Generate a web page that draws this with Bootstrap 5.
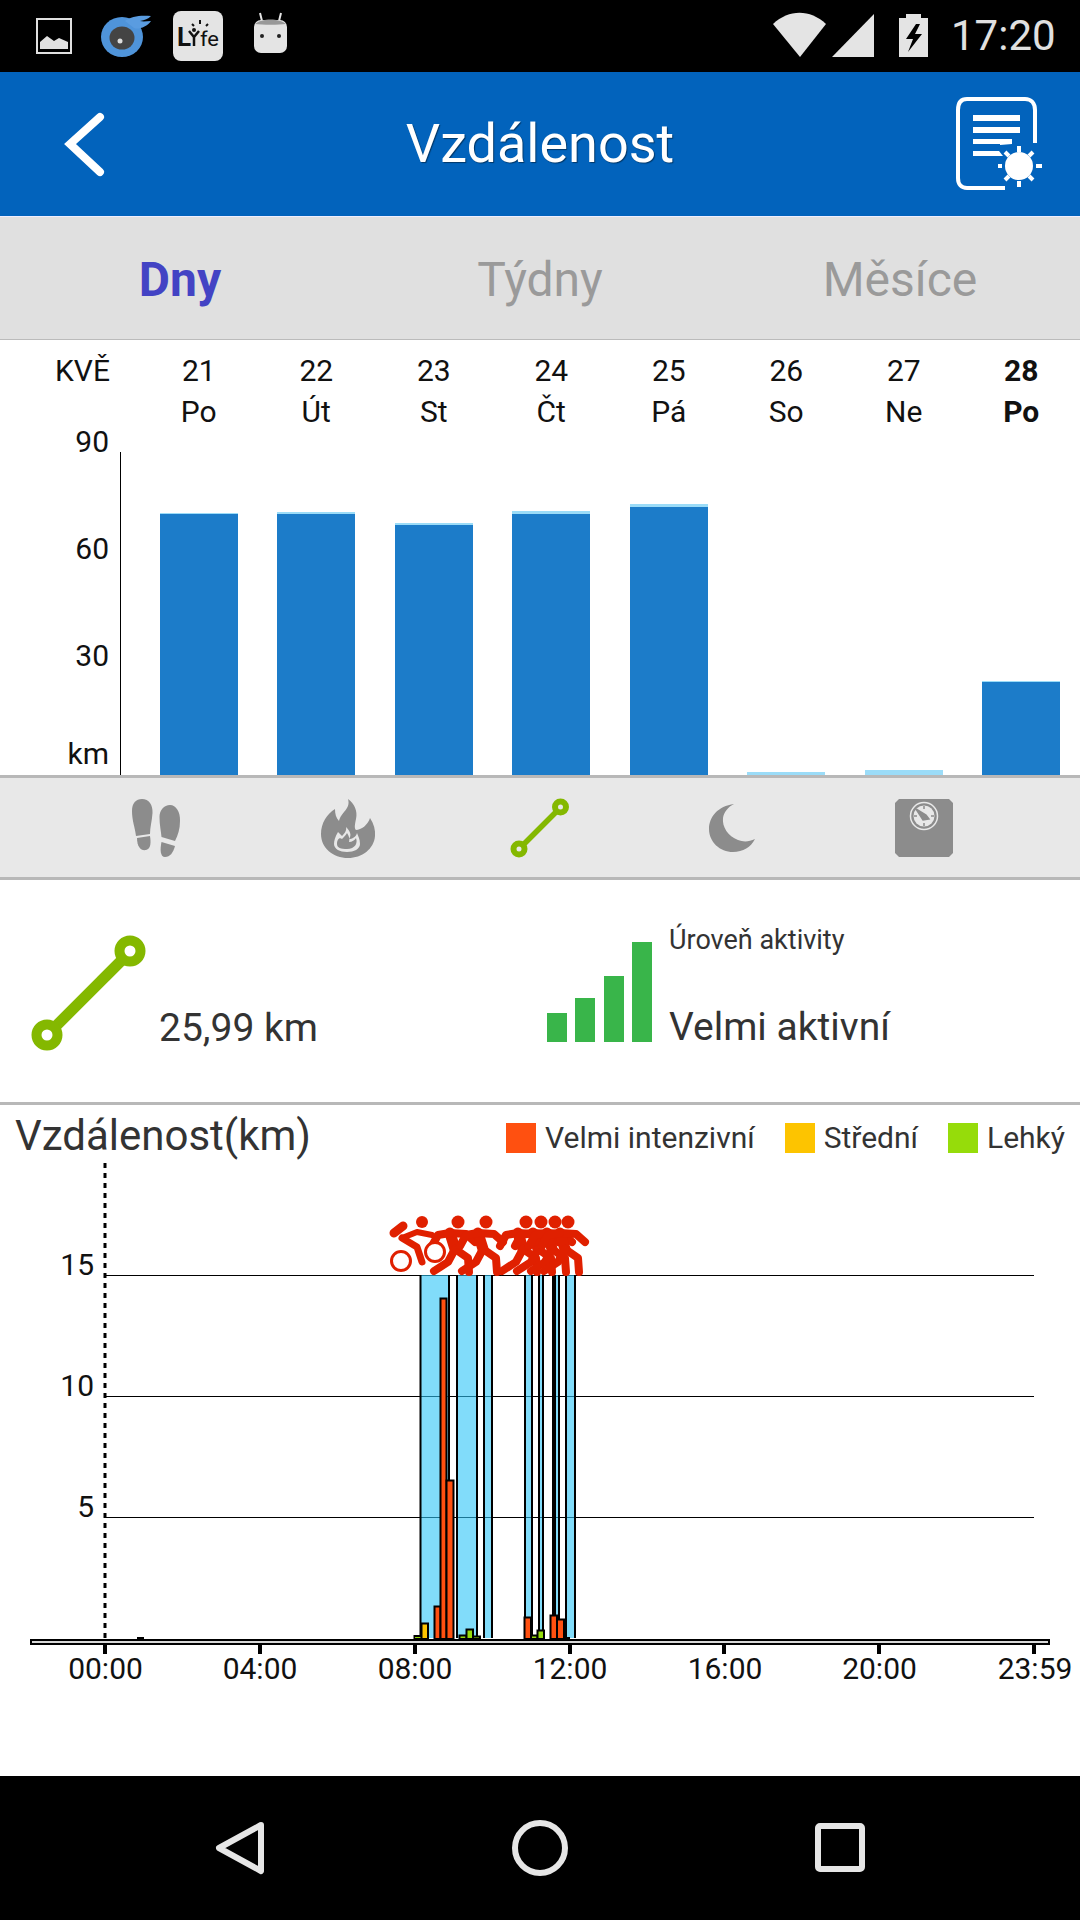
<!DOCTYPE html>
<html lang="cs">
<head>
  <meta charset="UTF-8" />
  <meta name="viewport" content="width=device-width, initial-scale=1.0"/>
  <title>Vzdálenost</title>
  <link href="https://cdn.jsdelivr.net/npm/bootstrap@5.3.2/dist/css/bootstrap.min.css" rel="stylesheet" />
  <style>
    body {
      background-color: #fff;
      color: #111;
      font-family: Roboto, "Liberation Sans", sans-serif;
      width: 1080px;
      margin: 0;
    }
    svg { display: block; }

    .status-bar { height: 72px; background-color: #000; }
    .status-time { color: #e0e0e0; font-size: 42px; line-height: 72px; width: 105px; margin-left: 3px; margin-right: 24px; }

    .app-header { height: 144px; background-color: #0263bc; }
    .app-header-side { width: 130px; }
    .app-title { color: #fff; font-size: 54px; line-height: 60px; text-shadow: 1px 1px 1px rgba(0, 0, 0, .45); }

    .period-tabs { height: 124px; padding-top: 3px; background-color: #e0e0e0; border-top: 1px solid #eef; border-bottom: 1px solid #bbb; }
    .period-tab { width: 360px; font-size: 48px; line-height: 60px; color: #9a9a9a; }
    .period-tab.active-tab { color: #4343c4; font-weight: 700; }

    .date-row { padding-top: 10px; height: 92px; font-size: 30px; line-height: 41px; }
    .month-cell { width: 140px; padding-right: 30px; text-align: right; }
    .date-cell { width: 117.5px; text-align: center; }

    .week-chart { height: 343px; }
    .y-labels { width: 120px; padding-right: 11px; text-align: right; font-size: 30px; line-height: 20px; gap: 87px; }
    .km-label { margin-top: -9px; }
    .week-plot { width: 960px; height: 323px; margin-top: 20px; padding-left: 19px; border-left: 1px solid #000; }
    .day-col { width: 117.5px; }
    .day-bar { width: 78px; }
    .bar-top { background-color: #9bdcf8; }
    .bar-fill { background-color: #1c7cc9; }

    .metric-strip { height: 105px; background-color: #e8e8e8; border-top: 3px solid #b8b8b8; border-bottom: 3px solid #b8b8b8; padding: 0 60px; }
    .metric-item { width: 192px; }

    .summary { height: 225px; padding-top: 45px; border-bottom: 3px solid #b8b8b8; color: #333; }
    .summary-distance { width: 547px; padding-left: 31px; margin-top: 10px; }
    .summary-value { font-size: 39px; line-height: 46px; margin-left: 13px; }
    .level-bars { width: 105px; height: 100px; margin-top: 17px; margin-right: 17px; }
    .level-bars div { width: 20px; background-color: #39b54a; }
    .level-text { height: 125px; }
    .level-caption { font-size: 27px; line-height: 30px; }
    .level-value { font-size: 39px; line-height: 46px; }

    .detail-head { height: 56px; padding: 6px 15px 0 15px; color: #333; }
    .detail-title { font-size: 42px; line-height: 50px; }
    .legend-item { font-size: 30px; line-height: 30px; margin-left: 30px; margin-top: 12px; }
    .legend-swatch { width: 30px; height: 30px; margin-right: 9px; }
    .detail-chart { height: 615px; }
    .detail-chart text { font-family: Roboto, "Liberation Sans", sans-serif; font-size: 30px; fill: #111; }

    .nav-bar { height: 144px; background-color: #000; padding: 0 90px; }
    .nav-item-box { width: 300px; }
  </style>
</head>
<body>

  <!-- status bar -->
  <div class="status-bar d-flex align-items-center">
    <svg width="300" height="72" viewBox="0 0 300 72">
      <rect x="37" y="19" width="34" height="34" fill="none" stroke="#e0e0e0" stroke-width="2"/>
      <path d="M40 49V42L47 36L54 41L59 38L68 42V49Z" fill="#e0e0e0"/>
      <ellipse cx="122" cy="37" rx="21" ry="20" fill="#4f94da"/>
      <path d="M125 21C131 16 141 15 151 16C148 19 145 20 140 21C144 22 147 21 151 21C147 27 138 30 134 28Z" fill="#5a9ce0"/>
      <ellipse cx="122" cy="38" rx="12.5" ry="11.5" fill="#444"/>
      <circle cx="120" cy="41" r="2.5" fill="#ddd"/>
      <rect x="173" y="11" width="50" height="50" rx="8" fill="#e4e4e4"/>
      <text x="177" y="46" font-family="Roboto, sans-serif" font-size="26" font-weight="700" fill="#111">L</text>
      <path d="M189 31L194 37L199 31M194 37V46" fill="none" stroke="#111" stroke-width="2.5"/>
      <circle cx="194" cy="30" r="2" fill="#111"/>
      <path d="M200 20V24M192 24L194 26M208 24L206 26" stroke="#111" stroke-width="2"/>
      <text x="200" y="46" font-family="Roboto, sans-serif" font-size="21" fill="#111" textLength="19" lengthAdjust="spacingAndGlyphs">fe</text>
      <rect x="254" y="20" width="33" height="33" rx="7" fill="#e4e4e4"/>
      <path d="M262 21L260 13M279 21L281 13" stroke="#e4e4e4" stroke-width="2"/>
      <path d="M255 24C262 18 279 18 286 24C279 25 262 25 255 24Z" fill="#999"/>
      <circle cx="262" cy="36" r="2" fill="#222"/>
      <circle cx="279" cy="36" r="2" fill="#222"/>
    </svg>
    <svg class="ms-auto" width="175" height="72" viewBox="773 0 175 72">
      <path d="M773 24C789 9 810 9 826 24L800 57Z" fill="#e4e4e4"/>
      <path d="M832 57L874 14V57Z" fill="#e4e4e4"/>
      <path d="M899 18H906V14H921V18H928V57H899Z" fill="#e4e4e4"/>
      <path d="M916 24L906 39H913L908 52L922 34H915L920 24Z" fill="#000"/>
    </svg>
    <div class="status-time">17:20</div>
  </div>

  <!-- header -->
  <div class="app-header d-flex align-items-center">
    <div class="app-header-side">
      <svg class="ms-5" width="60" height="70" viewBox="48 109 60 70">
        <path d="M100 117L70 144L100 172" fill="none" stroke="#fff" stroke-width="8" stroke-linecap="round" stroke-linejoin="miter"/>
      </svg>
    </div>
    <div class="app-title flex-fill text-center">Vzdálenost</div>
    <div class="app-header-side">
      <svg width="100" height="100" viewBox="950 94 100 100">
        <path d="M1005 188H967C961 188 958 184 958 178V110C958 103 961 99 967 99H1025C1031 99 1035 103 1035 110V143" fill="none" stroke="#fff" stroke-width="4"/>
        <path d="M973 115H1020V121H973ZM973 127H1020V133H973ZM973 139H1012V144L1000 145V144H973ZM973 151H999L1003 156H973Z" fill="#fff"/>
        <circle cx="1019" cy="166" r="14" fill="#fff"/>
        <path d="M1019 146V152M1019 181V187M998 166H1002M1036 166H1042M1005 152L1009 156M1033 152L1029 156M1005 180L1009 176M1033 180L1029 176" stroke="#fff" stroke-width="4"/>
      </svg>
    </div>
  </div>

  <!-- day / week / month -->
  <div class="period-tabs d-flex align-items-center text-center">
    <div class="period-tab active-tab">Dny</div>
    <div class="period-tab">Týdny</div>
    <div class="period-tab">Měsíce</div>
  </div>

  <div class="date-row d-flex">
    <div class="month-cell">KVĚ</div>
    <div class="date-cell">21<br>Po</div>
    <div class="date-cell">22<br>Út</div>
    <div class="date-cell">23<br>St</div>
    <div class="date-cell">24<br>Čt</div>
    <div class="date-cell">25<br>Pá</div>
    <div class="date-cell">26<br>So</div>
    <div class="date-cell">27<br>Ne</div>
    <div class="date-cell fw-bold">28<br>Po</div>
  </div>

  <!-- weekly bars -->
  <div class="week-chart d-flex">
    <div class="y-labels d-flex flex-column">
      <div>90</div>
      <div>60</div>
      <div>30</div>
      <div class="km-label">km</div>
    </div>
    <div class="week-plot d-flex align-items-end">
      <div class="day-col d-flex justify-content-center"><div class="day-bar"><div class="bar-top" style="height:1px"></div><div class="bar-fill" style="height:261px"></div></div></div>
      <div class="day-col d-flex justify-content-center"><div class="day-bar"><div class="bar-top" style="height:2px"></div><div class="bar-fill" style="height:261px"></div></div></div>
      <div class="day-col d-flex justify-content-center"><div class="day-bar"><div class="bar-top" style="height:2px"></div><div class="bar-fill" style="height:250px"></div></div></div>
      <div class="day-col d-flex justify-content-center"><div class="day-bar"><div class="bar-top" style="height:3px"></div><div class="bar-fill" style="height:261px"></div></div></div>
      <div class="day-col d-flex justify-content-center"><div class="day-bar"><div class="bar-top" style="height:3px"></div><div class="bar-fill" style="height:268px"></div></div></div>
      <div class="day-col d-flex justify-content-center"><div class="day-bar"><div class="bar-top" style="height:3px"></div></div></div>
      <div class="day-col d-flex justify-content-center"><div class="day-bar"><div class="bar-top" style="height:5px"></div></div></div>
      <div class="day-col d-flex justify-content-center"><div class="day-bar"><div class="bar-top" style="height:1px"></div><div class="bar-fill" style="height:93px"></div></div></div>
    </div>
  </div>

  <!-- metric icons -->
  <div class="metric-strip d-flex align-items-center">
    <div class="metric-item d-flex justify-content-center">
      <svg width="50" height="60" viewBox="131 797 50 60" fill="#8c8c8c">
        <path d="M142 798C149 798 153 804 152.5 812C152 820 150 826 150 833L136 835C135 826 132 820 132 810C132 802 136 798 142 798Z"/>
        <path d="M137 837L150 835C151 841 151 848 146 849C141 850 137 846 137 837Z"/>
        <path d="M170 804C176 804 180.5 811 180 820C180 828 178 834 175 840L161.5 836C161 830 159.5 824 159.5 816C159.5 809 164 804 170 804Z"/>
        <path d="M161.5 841L175 845C173 852 170 856 165 856C160 856 160 848 161.5 841Z"/>
      </svg>
    </div>
    <div class="metric-item d-flex justify-content-center">
      <svg width="56" height="60" viewBox="320 797 56 60">
        <path d="M348 798C354 802 358 810 356 818C355 823 354 827 356 829C361 829 368 824 370 817C374 823 375.5 829 375 835C374 848 362 857 348 857C333 857 321 847 321 833C321 822 327 813 335 808C335 813 336 817 339 820C341 811 351 808 348 798Z" fill="#8c8c8c"/>
        <path d="M346 826C347 830 344 833 342 835L338 831C335 836 334 840 334 843C334 848 340 851 347 851C354 851 360 848 360 843C360 838 358 835 357 832C356 836 352 838 349 838C352 834 350 830 346 826Z" fill="#e8e8e8"/>
        <path d="M337 843C337 839 339 836 342 838C344 836 346 834 347 832C349 835 350 838 349 841C352 841 355 839 356 837C358 842 355 848 347 848C341 848 337 847 337 843Z" fill="#8c8c8c"/>
      </svg>
    </div>
    <div class="metric-item d-flex justify-content-center">
      <svg width="60" height="60" viewBox="510 797 60 60">
        <path d="M519 848L561 806" stroke="#84b800" stroke-width="5.5"/>
        <circle cx="560.5" cy="806" r="5.5" fill="#e8e8e8" stroke="#84b800" stroke-width="6"/>
        <circle cx="519" cy="848" r="5.5" fill="#e8e8e8" stroke="#84b800" stroke-width="6"/>
      </svg>
    </div>
    <div class="metric-item d-flex justify-content-center">
      <svg width="46" height="50" viewBox="709 802 46 50">
        <path d="M734 803C718 805 709 816 709 828C709 841 720 851 733 851C743 851 751 846 755 838C749 841 743 841 738 839C728 835 722 826 723 817C724 811 728 806 734 803Z" fill="#8c8c8c"/>
      </svg>
    </div>
    <div class="metric-item d-flex justify-content-center">
      <svg width="58" height="58" viewBox="895 798 58 58">
        <path d="M899 798H949L953 802V852L949 856H899L895 852V802Z" fill="#8c8c8c"/>
        <circle cx="924" cy="815" r="13.5" fill="none" stroke="#e8e8e8" stroke-width="1.5"/>
        <circle cx="924" cy="815" r="10.5" fill="#e8e8e8"/>
        <path d="M916 808L926 814L929 818L923 819ZM924 805V808M924 822V825M914 815H917M931 815H934" fill="#8c8c8c" stroke="#8c8c8c" stroke-width="1.5"/>
      </svg>
    </div>
  </div>

  <!-- today summary -->
  <div class="summary d-flex">
    <div class="summary-distance d-flex align-items-end align-self-start">
      <svg width="115" height="116" viewBox="31 935 115 116">
        <path d="M47 1035L130 952" stroke="#84b800" stroke-width="11"/>
        <circle cx="130" cy="951" r="10.5" fill="#fff" stroke="#84b800" stroke-width="10"/>
        <circle cx="47" cy="1035" r="10.5" fill="#fff" stroke="#84b800" stroke-width="10"/>
      </svg>
      <div class="summary-value">25,99 km</div>
    </div>
    <div class="level-bars d-flex align-items-end justify-content-between">
      <div style="height:29px"></div>
      <div style="height:44px"></div>
      <div style="height:66px"></div>
      <div style="height:100px"></div>
    </div>
    <div class="level-text d-flex flex-column justify-content-between">
      <div class="level-caption">Úroveň aktivity</div>
      <div class="level-value">Velmi aktivní</div>
    </div>
  </div>

  <!-- intraday chart -->
  <div class="detail-head d-flex justify-content-between align-items-start">
    <div class="detail-title">Vzdálenost(km)</div>
    <div class="d-flex">
      <div class="legend-item d-flex"><div class="legend-swatch" style="background-color:#ff5010"></div>Velmi intenzivní</div>
      <div class="legend-item d-flex"><div class="legend-swatch" style="background-color:#fdc400"></div>Střední</div>
      <div class="legend-item d-flex"><div class="legend-swatch" style="background-color:#96dc0a"></div>Lehký</div>
    </div>
  </div>

  <div class="detail-chart">
    <svg width="1080" height="615" viewBox="0 1161 1080 615">
      <defs>
        <g id="runner" fill="none" stroke="#e02000" stroke-width="8" stroke-linecap="round" stroke-linejoin="round">
          <circle cx="0" cy="0" r="6.5" fill="#e02000" stroke="none"/>
          <path d="M-8 11L-3 27" stroke-width="11"/>
          <path d="M-8 11L8 12L17 20"/>
          <path d="M-8 11L-20 13L-26 24"/>
          <path d="M-3 27L10 36L11 50"/>
          <path d="M-3 27L-10 40L-24 49"/>
        </g>
      </defs>

      <!-- grid -->
      <path d="M105 1275.5H1034M105 1396.5H1034M105 1517.5H1034" stroke="#000" stroke-width="1"/>
      <path d="M105 1163V1638" stroke="#000" stroke-width="3" stroke-dasharray="5 5"/>
      <text x="94" y="1275" text-anchor="end">15</text>
      <text x="94" y="1396" text-anchor="end">10</text>
      <text x="94" y="1517" text-anchor="end">5</text>

      <!-- active periods -->
      <g fill="#2dc5f7" fill-opacity=".6">
        <rect x="420" y="1275" width="29" height="363"/>
        <rect x="457" y="1275" width="20" height="363"/>
        <rect x="484" y="1275" width="8" height="363"/>
        <rect x="525" y="1275" width="7" height="363"/>
        <rect x="539" y="1275" width="4" height="363"/>
        <rect x="555" y="1275" width="4" height="363"/>
        <rect x="566" y="1275" width="9" height="363"/>
      </g>
      <path d="M420.5 1275V1638M449 1275V1638M457 1275V1638M477 1275V1638M484 1275V1638M492 1275V1638M525 1275V1638M532 1275V1638M539 1275V1638M543 1275V1638M554 1275V1638M559 1275V1638M566 1275V1638M575 1275V1638" stroke="#000" stroke-width="2"/>
      <rect x="552" y="1275" width="4" height="363" fill="#000"/>

      <!-- activity bars -->
      <g stroke="#000" stroke-width="2">
        <rect x="414.5" y="1636" width="7" height="3" fill="#96dc0a"/>
        <rect x="421.5" y="1623.5" width="6.5" height="15.5" fill="#fdc400"/>
        <rect x="434.5" y="1606.5" width="6" height="32.5" fill="#ff5010"/>
        <rect x="440.5" y="1298.5" width="6" height="340.5" fill="#ff5010"/>
        <rect x="446.5" y="1480.5" width="7" height="158.5" fill="#ff5010"/>
        <rect x="459.5" y="1635.5" width="7" height="3.5" fill="#96dc0a"/>
        <rect x="466.5" y="1629.5" width="6.5" height="9.5" fill="#96dc0a"/>
        <rect x="473" y="1636.5" width="7" height="2.5" fill="#96dc0a"/>
        <rect x="524.5" y="1617.5" width="6.5" height="21.5" fill="#ff5010"/>
        <rect x="531" y="1635.5" width="6.5" height="3.5" fill="#96dc0a"/>
        <rect x="537.5" y="1630.5" width="6.5" height="8.5" fill="#96dc0a"/>
        <rect x="550.5" y="1615.5" width="6.5" height="23.5" fill="#ff5010"/>
        <rect x="557" y="1619.5" width="7" height="19.5" fill="#ff5010"/>
      </g>
      <rect x="564" y="1637" width="6" height="2" fill="#000"/>
      <rect x="137" y="1637" width="7" height="2" fill="#000"/>

      <!-- activity icons: cyclist, then runners -->
      <use href="#runner" x="458" y="1222"/>
      <use href="#runner" x="486" y="1222"/>
      <use href="#runner" x="526" y="1222"/>
      <use href="#runner" x="541" y="1222"/>
      <use href="#runner" x="555" y="1222"/>
      <use href="#runner" x="568" y="1222"/>
      <g fill="none" stroke="#e02000" stroke-linecap="round" stroke-linejoin="round">
        <circle cx="422" cy="1222" r="6" fill="#e02000" stroke="none"/>
        <path d="M394 1233L403 1226" stroke-width="9"/>
        <path d="M402 1238L417 1232L432 1235" stroke-width="6"/>
        <path d="M402 1238L417 1247L422 1262" stroke-width="7"/>
        <circle cx="401" cy="1261" r="9.5" stroke-width="3" fill="#fff"/>
        <circle cx="435" cy="1252" r="9.5" stroke-width="3" fill="#fff"/>
      </g>

      <!-- time axis -->
      <rect x="31" y="1640" width="1018" height="4" fill="#d8d8d8" stroke="#000" stroke-width="2"/>
      <path d="M105 1645V1654M260 1645V1654M415 1645V1654M570 1645V1654M724 1645V1654M879 1645V1654M1034 1645V1654" stroke="#000" stroke-width="4"/>
      <g text-anchor="middle">
        <text x="105.5" y="1679">00:00</text>
        <text x="260" y="1679">04:00</text>
        <text x="415" y="1679">08:00</text>
        <text x="570" y="1679">12:00</text>
        <text x="725" y="1679">16:00</text>
        <text x="879.5" y="1679">20:00</text>
        <text x="1035" y="1679">23:59</text>
      </g>
    </svg>
  </div>

  <!-- android nav -->
  <div class="nav-bar d-flex align-items-center">
    <div class="nav-item-box d-flex justify-content-center">
      <svg width="60" height="60" viewBox="212 1818 60 60">
        <path d="M263 1825L221 1848L263 1871Z" fill="none" stroke="#e6e6e6" stroke-width="6" stroke-linejoin="round"/>
      </svg>
    </div>
    <div class="nav-item-box d-flex justify-content-center">
      <svg width="60" height="60" viewBox="510 1818 60 60">
        <circle cx="540" cy="1848" r="25" fill="none" stroke="#e6e6e6" stroke-width="6"/>
      </svg>
    </div>
    <div class="nav-item-box d-flex justify-content-center">
      <svg width="60" height="60" viewBox="810 1818 60 60">
        <rect x="818" y="1826" width="44" height="43" rx="2" fill="none" stroke="#e6e6e6" stroke-width="6"/>
      </svg>
    </div>
  </div>

</body>
</html>
